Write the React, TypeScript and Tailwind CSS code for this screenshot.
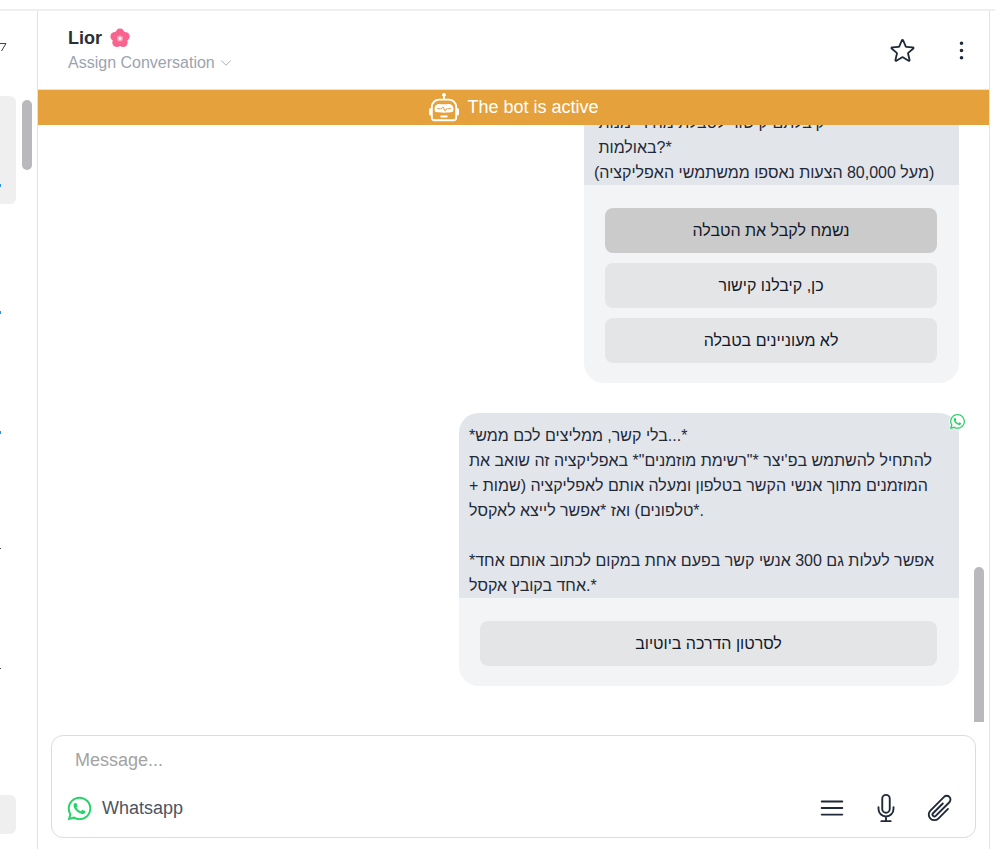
import { BsRobot } from "react-icons/bs";
import { FaWhatsapp } from "react-icons/fa";
import {
  HiOutlineBars3,
  HiOutlineChevronDown,
  HiOutlineEllipsisVertical,
  HiOutlineMicrophone,
  HiOutlinePaperClip,
  HiOutlineStar,
} from "react-icons/hi2";

const firstMessage = `*האם
 קיבלתם קישור לטבלת מחירי מנות
 באולמות?*
(מעל 80,000 הצעות נאספו ממשתמשי האפליקציה)`;

const secondMessage = `*בלי קשר, ממליצים לכם ממש...*
להתחיל להשתמש בפ'יצר *"רשימת מוזמנים"* באפליקציה זה שואב את המוזמנים מתוך אנשי הקשר בטלפון ומעלה אותם לאפליקציה (שמות + טלפונים) ואז *אפשר לייצא לאקסל*.

*אפשר לעלות גם 300 אנשי קשר בפעם אחת במקום לכתוב אותם אחד אחד בקובץ אקסל.*`;

function Flower() {
  return (
    <svg width="20" height="20" viewBox="0 0 20 20">
      <g fill="#f8648f">
        <circle cx="10" cy="5.2" r="4.6" />
        <circle cx="15" cy="8.6" r="4.6" />
        <circle cx="13.1" cy="14.5" r="4.6" />
        <circle cx="6.9" cy="14.5" r="4.6" />
        <circle cx="5" cy="8.6" r="4.6" />
      </g>
      <circle cx="10" cy="10.4" r="3" fill="#fda4bd" />
      <circle cx="10" cy="10.4" r="1.3" fill="#fff" />
    </svg>
  );
}

function Sidebar() {
  return (
    <div className="w-[38px] shrink-0 border-r border-[#e2e2e2] relative overflow-hidden">
      <svg className="mt-[31px] -ml-px" width="8" height="10" viewBox="0 0 8 10" fill="none">
        <path d="M0 1.5h7L2.5 9" stroke="#374151" strokeWidth="1" />
      </svg>
      <div className="mt-[44px] w-4 h-[108px] bg-[#efefef] rounded-r-md flex flex-col justify-end pb-[17px]">
        <div className="w-px h-[3px] bg-[#2b8fe6]" />
      </div>
      <div className="mt-[107px] w-px h-[3px] bg-[#2b8fe6]" />
      <div className="mt-[117px] w-px h-[3px] bg-[#2b8fe6]" />
      <div className="mt-[114px] w-px h-px bg-[#374151]" />
      <div className="mt-[119px] w-px h-px bg-[#374151]" />
      <div className="mt-[126px] w-4 h-[39px] bg-[#efefef] rounded-r-md" />
      <div className="absolute left-[22px] top-[89px] w-[10px] h-[70px] rounded-full bg-[#b9b8bd]" />
    </div>
  );
}

function ChatHeader() {
  return (
    <div className="h-[79px] shrink-0 border-b border-[#e3e3e3] flex items-center justify-between pl-[30px] pr-[13px]">
      <div className="flex flex-col pt-px">
        <div className="flex items-center gap-2 h-[24px]">
          <span className="text-[18px] font-bold text-[#2b2f36]">Lior</span>
          <Flower />
        </div>
        <div className="flex items-center gap-1 mt-[1px] h-[24px] text-[16px] text-[#9ca3af]">
          Assign Conversation
          <HiOutlineChevronDown className="w-[14px] h-[14px]" />
        </div>
      </div>
      <div className="flex items-center gap-[30px] text-[#1f2937]">
        <HiOutlineStar className="w-[29px] h-[29px]" />
        <HiOutlineEllipsisVertical className="w-[29px] h-[29px]" />
      </div>
    </div>
  );
}

function BotBanner() {
  return (
    <div className="h-[35px] shrink-0 bg-[#e5a13b] flex items-center justify-center gap-2 text-white text-[18px] pl-px">
      <BsRobot className="w-[30px] h-[30px]" />
      The bot is active
    </div>
  );
}

function Bubble({
  text,
  buttons,
  width,
  whatsapp,
}: {
  text: string;
  buttons: { label: string; active?: boolean }[];
  width: string;
  whatsapp?: boolean;
}) {
  return (
    <div className={`relative shrink-0 ${width}`}>
      <div className="rounded-[20px] overflow-hidden bg-[#f3f4f6]">
        <div className="bg-[#e2e5ea] px-[10px] pt-[10px] text-[16px] leading-[25px] text-[#1f2937] whitespace-pre-wrap">
          {text}
        </div>
        <div className="pl-[21px] pr-[22px] pt-[23px] pb-[20px] flex flex-col gap-[10px]">
          {buttons.map((b) => (
            <div
              key={b.label}
              className={`h-[45px] rounded-lg flex items-center justify-center text-[16px] text-[#111827] ${
                b.active ? "bg-[#cbcbcb]" : "bg-[#e4e5e7]"
              }`}
            >
              {b.label}
            </div>
          ))}
        </div>
      </div>
      {whatsapp && (
        <div className="absolute top-0 right-[-7px] w-[17px] h-[17px] bg-white/70 rounded-full flex items-center justify-center">
          <FaWhatsapp className="w-[17px] h-[17px] text-[#25d366]" />
        </div>
      )}
    </div>
  );
}

function Composer() {
  return (
    <div className="mx-[13px] mb-[11px] h-[103px] shrink-0 border border-[#dcdcdc] rounded-xl flex flex-col">
      <div className="pl-[23px] pt-[12px] text-[18px] leading-[24px] text-[#a3a3a3]">Message...</div>
      <div className="mt-auto flex items-center justify-between pl-[14px] pr-[20px] pb-[14px]">
        <div className="flex items-center gap-[9px] text-[18px] text-[#4b5563]">
          <FaWhatsapp className="w-[27px] h-[27px] text-[#25d366]" />
          Whatsapp
        </div>
        <div className="flex items-center gap-[24px] text-[#1f2937]">
          <HiOutlineBars3 className="w-[30px] h-[30px]" />
          <HiOutlineMicrophone className="w-[30px] h-[30px]" />
          <HiOutlinePaperClip className="w-[30px] h-[30px]" />
        </div>
      </div>
    </div>
  );
}

export default function App() {
  return (
    <div className="w-[995px] h-[849px] bg-white flex flex-col overflow-hidden font-['Liberation_Sans',Arial,sans-serif]">
      <div className="h-[11px] shrink-0 border-b-2 border-[#efefef]" />
      <div className="flex-1 flex min-h-0">
        <Sidebar />
        <div className="w-[952px] shrink-0 border-r border-[#e3e3e3] flex flex-col min-h-0">
          <ChatHeader />
          <BotBanner />
          <div className="relative flex-1 min-h-0 overflow-hidden flex flex-col justify-end items-end gap-[30px] pr-[30px] pb-[49px]">
            <Bubble
              width="w-[375px]"
              text={firstMessage}
              buttons={[
                { label: "נשמח לקבל את הטבלה", active: true },
                { label: "כן, קיבלנו קישור" },
                { label: "לא מעוניינים בטבלה" },
              ]}
            />
            <Bubble
              width="w-[500px]"
              whatsapp
              text={secondMessage}
              buttons={[{ label: "לסרטון הדרכה ביוטיוב" }]}
            />
            <div className="absolute right-[5px] top-[442px] w-[10px] h-[155px] bg-[#b9b8bd] rounded-t-md" />
          </div>
          <Composer />
        </div>
      </div>
    </div>
  );
}
